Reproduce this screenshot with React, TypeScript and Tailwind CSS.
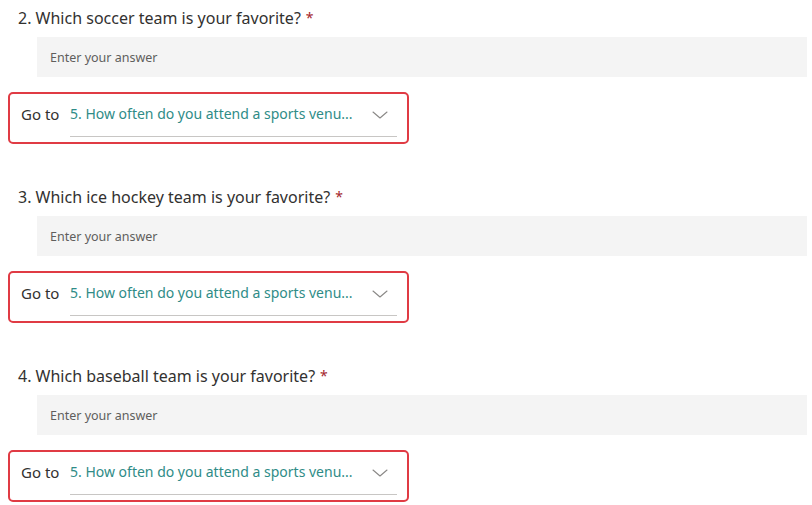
import React from "react";

const questions = [
  "2. Which soccer team is your favorite?",
  "3. Which ice hockey team is your favorite?",
  "4. Which baseball team is your favorite?",
];

function Chevron() {
  return (
    <svg width="16" height="8" viewBox="0 0 16 8" fill="none" className="shrink-0 mt-[7px]">
      <path d="M1 1 L8 7 L15 1" stroke="#8a8886" strokeWidth="1.1" strokeLinecap="round" strokeLinejoin="round" />
    </svg>
  );
}

function Block({ title }: { title: string }) {
  return (
    <div className="flex flex-col mb-[41px]">
      <div className="pl-[18px] h-[24px] flex items-center text-[16px] text-[#323130] leading-[24px]">
        <span>{title}</span>
        <span className="ml-[5px] text-[#a4262c] text-[14px]">*</span>
      </div>
      <div className="mt-[7px] ml-[37px] mr-[5px] h-[40px] bg-[#f4f4f4] flex items-center pl-[13px] pt-[2px] text-[12.5px] text-[#605e5c]">
        Enter your answer
      </div>
      <div className="mt-[15px] ml-[8px] w-[401px] h-[52px] border-2 border-[#e03b44] rounded-[5px] flex items-start pl-[11px] pt-[10px]">
        <span className="text-[15px] leading-[20px] text-[#323130] w-[49px]">Go to</span>
        <div className="w-[327px] h-[33px] border-b border-[#c8c6c4] flex items-start justify-between pr-[9px]">
          <span className="text-[14px] leading-[20px] text-[#2f8c87]">5. How often do you attend a sports venu...</span>
          <Chevron />
        </div>
      </div>
    </div>
  );
}

export default function App() {
  return (
    <div className="w-[812px] h-[505px] bg-white overflow-hidden pt-[6px]" style={{ fontFamily: '"Noto Sans", "Open Sans", sans-serif' }}>
      {questions.map((q) => (
        <Block key={q} title={q} />
      ))}
    </div>
  );
}
